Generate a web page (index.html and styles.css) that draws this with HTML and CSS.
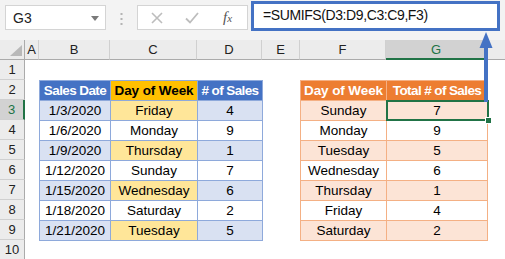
FILE: index.html
```html
<!DOCTYPE html>
<html>
<head>
<meta charset="utf-8">
<link rel="stylesheet" href="styles.css">
</head>
<body>
<div class="app">
  <div class="toolbar">
    <div class="namebox">
      <span>G3</span>
      <svg class="caret" width="8" height="5" viewBox="0 0 8 5"><path d="M0 0H8L4 5Z" fill="#7a7a7a"/></svg>
    </div>
    <div class="grip">
      <svg width="3" height="12" viewBox="0 0 3 12"><rect x="0.5" y="0" width="2" height="2" fill="#b4b4b4"/><rect x="0.5" y="5" width="2" height="2" fill="#b4b4b4"/><rect x="0.5" y="10" width="2" height="2" fill="#b4b4b4"/></svg>
    </div>
    <div class="fbuttons">
      <svg class="btn-x" width="12" height="12" viewBox="0 0 12 12"><path d="M1 1L11 11M11 1L1 11" stroke="#bdbdbd" stroke-width="1.6" fill="none"/></svg>
      <svg class="btn-ok" width="14" height="12" viewBox="0 0 14 12"><path d="M1 6.5L5 10.5L13 1" stroke="#bdbdbd" stroke-width="1.8" fill="none"/></svg>
      <span class="fx">f<small>x</small></span>
    </div>
    <div class="formula">=SUMIFS(D3:D9,C3:C9,F3)</div>
  </div>

  <div class="sheet">
    <div class="corner"><svg width="12" height="11" viewBox="0 0 12 11"><path d="M12 0V11H0Z" fill="#b9b9b9"/></svg></div>
    <div class="colhead">A</div>
    <div class="colhead">B</div>
    <div class="colhead">C</div>
    <div class="colhead">D</div>
    <div class="colhead">E</div>
    <div class="colhead">F</div>
    <div class="colhead active">G</div>
    <div class="colhead last"></div>

    <div class="rowhead r1">1</div>
    <div class="rowhead r2">2</div>
    <div class="rowhead r3 active">3</div>
    <div class="rowhead r4">4</div>
    <div class="rowhead r5">5</div>
    <div class="rowhead r6">6</div>
    <div class="rowhead r7">7</div>
    <div class="rowhead r8">8</div>
    <div class="rowhead r9">9</div>
    <div class="rowhead r10">10</div>

    <table class="tbl blue">
      <colgroup><col class="w-b"><col class="w-c"><col class="w-d"></colgroup>
      <tr class="head"><th>Sales Date</th><th class="gold wide">Day of Week</th><th># of Sales</th></tr>
      <tr class="band"><td>1/3/2020</td><td class="gold">Friday</td><td>4</td></tr>
      <tr><td>1/6/2020</td><td>Monday</td><td>9</td></tr>
      <tr class="band"><td>1/9/2020</td><td class="gold">Thursday</td><td>1</td></tr>
      <tr><td>1/12/2020</td><td>Sunday</td><td>7</td></tr>
      <tr class="band"><td>1/15/2020</td><td class="gold">Wednesday</td><td>6</td></tr>
      <tr><td>1/18/2020</td><td>Saturday</td><td>2</td></tr>
      <tr class="band"><td>1/21/2020</td><td class="gold">Tuesday</td><td>5</td></tr>
    </table>

    <table class="tbl orange">
      <colgroup><col class="w-f"><col class="w-g"></colgroup>
      <tr class="head"><th class="wide">Day of Week</th><th>Total # of Sales</th></tr>
      <tr class="band"><td>Sunday</td><td class="selected">7<span class="handle"></span></td></tr>
      <tr><td>Monday</td><td>9</td></tr>
      <tr class="band"><td>Tuesday</td><td>5</td></tr>
      <tr><td>Wednesday</td><td>6</td></tr>
      <tr class="band"><td>Thursday</td><td>1</td></tr>
      <tr><td>Friday</td><td>4</td></tr>
      <tr class="band"><td>Saturday</td><td>2</td></tr>
    </table>
  </div>

  <svg class="arrow" width="16" height="72" viewBox="0 0 16 72">
    <path d="M8 1L1.5 17H14.5Z" fill="#4472c4"/>
    <rect x="6" y="15" width="4" height="56" fill="#4472c4"/>
  </svg>
</div>
</body>
</html>
```

FILE: styles.css
```css
html, body {
  margin: 0;
  padding: 0;
  background: #ffffff;
}

.app {
  position: relative;
  width: 505px;
  height: 259px;
  overflow: hidden;
  font-family: "Liberation Sans", Arial, sans-serif;
  color: #000;
}

.toolbar {
  height: 40px;
  background: #f3f3f3;
  display: flex;
  align-items: flex-start;
}

.namebox {
  box-sizing: border-box;
  margin: 5px 0 0 5px;
  width: 101px;
  height: 25px;
  background: #fff;
  border: 1px solid #d4d4d4;
  display: flex;
  align-items: center;
  justify-content: space-between;
  padding: 0 6px 0 7px;
  font-size: 14px;
  color: #222;
}

.caret {
  margin-top: 1px;
}

.grip {
  width: 31px;
  height: 25px;
  margin-top: 6px;
  display: flex;
  align-items: center;
  justify-content: center;
}

.fbuttons {
  box-sizing: border-box;
  margin-top: 5px;
  width: 111px;
  height: 25px;
  background: #fff;
  border: 1px solid #d4d4d4;
  display: flex;
  align-items: center;
  padding-left: 13px;
}

.btn-x {
  margin-right: 22px;
}

.btn-ok {
  margin-right: 24px;
}

.fx {
  font-family: "Liberation Serif", serif;
  font-style: italic;
  font-size: 15px;
  color: #555;
}

.fx small {
  font-size: 11px;
}

.formula {
  box-sizing: border-box;
  margin: 1px 0 0 3px;
  width: 249px;
  height: 30px;
  background: #fff;
  border: 3px solid #4472c4;
  padding-left: 9px;
  font-size: 14px;
  letter-spacing: -0.4px;
  line-height: 23px;
  color: #111;
}

.sheet {
  display: grid;
  grid-template-columns: 25px 14px 71px 87px 65px 38px 86px 101px 18px;
  grid-template-rows: 20px repeat(10, 20px);
  background: #fff;
}

.corner,
.colhead {
  box-sizing: border-box;
  background: #ececec;
  border-bottom: 1px solid #ababab;
  border-right: 1px solid #d0d0d0;
  font-size: 13px;
  color: #222;
  display: flex;
  align-items: center;
  justify-content: center;
}

.corner {
  justify-content: flex-end;
  align-items: flex-end;
  padding: 0 2px 3px 0;
  border-right: 1px solid #ababab;
}

.colhead.last {
  border-right: none;
}

.colhead.active {
  background: #d2d2d2;
  color: #217346;
  border-bottom: 2px solid #217346;
}

.rowhead {
  grid-column: 1;
  box-sizing: border-box;
  background: #ececec;
  border-right: 1px solid #ababab;
  border-bottom: 1px solid #d0d0d0;
  font-size: 13px;
  color: #222;
  display: flex;
  align-items: center;
  justify-content: center;
}

.rowhead.active {
  background: #d2d2d2;
  color: #217346;
  border-right: 2px solid #217346;
}

.r1 { grid-row: 2; }
.r2 { grid-row: 3; }
.r3 { grid-row: 4; }
.r4 { grid-row: 5; }
.r5 { grid-row: 6; }
.r6 { grid-row: 7; }
.r7 { grid-row: 8; }
.r8 { grid-row: 9; }
.r9 { grid-row: 10; }
.r10 { grid-row: 11; }

.tbl {
  grid-row: 3 / 11;
  border-collapse: collapse;
  table-layout: fixed;
  font-size: 13.5px;
  align-self: start;
}

.tbl.blue {
  grid-column: 3 / 6;
  width: 223px;
}

.tbl.orange {
  grid-column: 7 / 9;
  width: 187px;
}

.w-b { width: 71px; }
.w-c { width: 87px; }
.w-d { width: 65px; }
.w-f { width: 86px; }
.w-g { width: 101px; }

.tbl th,
.tbl td {
  height: 19px;
  padding: 0;
  text-align: center;
  white-space: nowrap;
  line-height: 19px;
}

.tbl th {
  font-weight: bold;
  letter-spacing: -0.6px;
}

.tbl th.wide {
  letter-spacing: -0.1px;
}

.blue th,
.blue td {
  border: 1px solid #8ea9db;
}

.blue th {
  background: #4472c4;
  color: #fff;
}

.blue th.gold {
  background: #ffc000;
  color: #000;
}

.blue .band td {
  background: #d9e1f2;
}

.blue .band td.gold {
  background: #ffe699;
}

.orange th,
.orange td {
  border: 1px solid #f4b084;
}

.orange th {
  background: #ed7d31;
  color: #fff;
}

.orange .band td {
  background: #fce4d6;
}

.selected {
  position: relative;
}

.selected::after {
  content: "";
  position: absolute;
  left: -1px;
  top: -1px;
  right: -2px;
  bottom: -1px;
  border: 2px solid #217346;
}

.handle {
  position: absolute;
  right: -5px;
  bottom: -4px;
  width: 5px;
  height: 5px;
  background: #217346;
  border: 1px solid #fff;
  z-index: 2;
}

.arrow {
  position: absolute;
  left: 478px;
  top: 31px;
}
```
